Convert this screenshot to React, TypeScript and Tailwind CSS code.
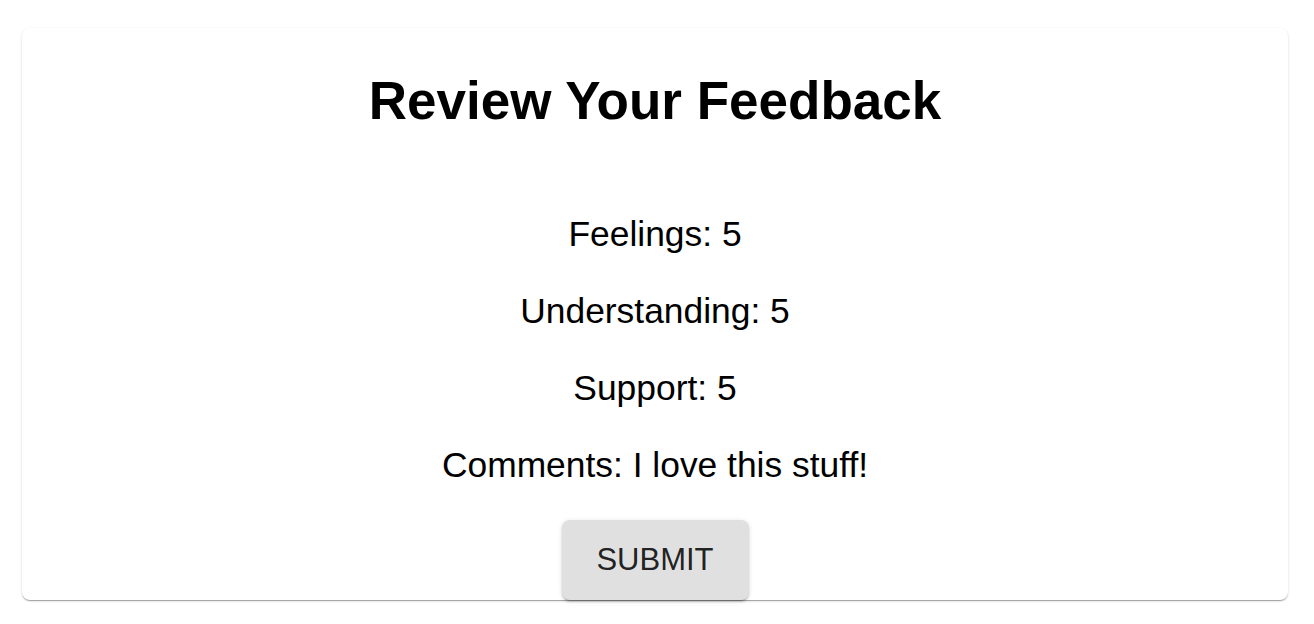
export default function App() {
  const rows = [
    { label: 'Feelings', value: '5' },
    { label: 'Understanding', value: '5' },
    { label: 'Support', value: '5' },
    { label: 'Comments', value: 'I love this stuff!' },
  ]

  return (
    <div className="min-h-[624px] bg-white pt-[28px] pl-[22px] pr-[26px] font-['Liberation_Sans',Arial,sans-serif] text-black">
      <div className="rounded-lg bg-white h-[572px] flex flex-col items-center pt-[43px] shadow-[0_2px_1px_-1px_rgba(0,0,0,0.2),0_1px_1px_0_rgba(0,0,0,0.14),0_1px_3px_0_rgba(0,0,0,0.12)]">
        <h1 className="text-[53px] leading-[60px] font-bold">Review Your Feedback</h1>

        <div className="mt-[83px] flex flex-col items-center gap-[37px]">
          {rows.map((r) => (
            <p key={r.label} className="text-[35.4px] leading-[40px]">
              {r.label}: {r.value}
            </p>
          ))}
        </div>

        <button className="mt-[35px] w-[187px] h-[80px] rounded-lg bg-[#e0e0e0] text-[31px] uppercase text-black/87 shadow-[0_3px_1px_-2px_rgba(0,0,0,0.2),0_2px_2px_0_rgba(0,0,0,0.14),0_1px_5px_0_rgba(0,0,0,0.12)]">
          Submit
        </button>
      </div>
    </div>
  )
}
